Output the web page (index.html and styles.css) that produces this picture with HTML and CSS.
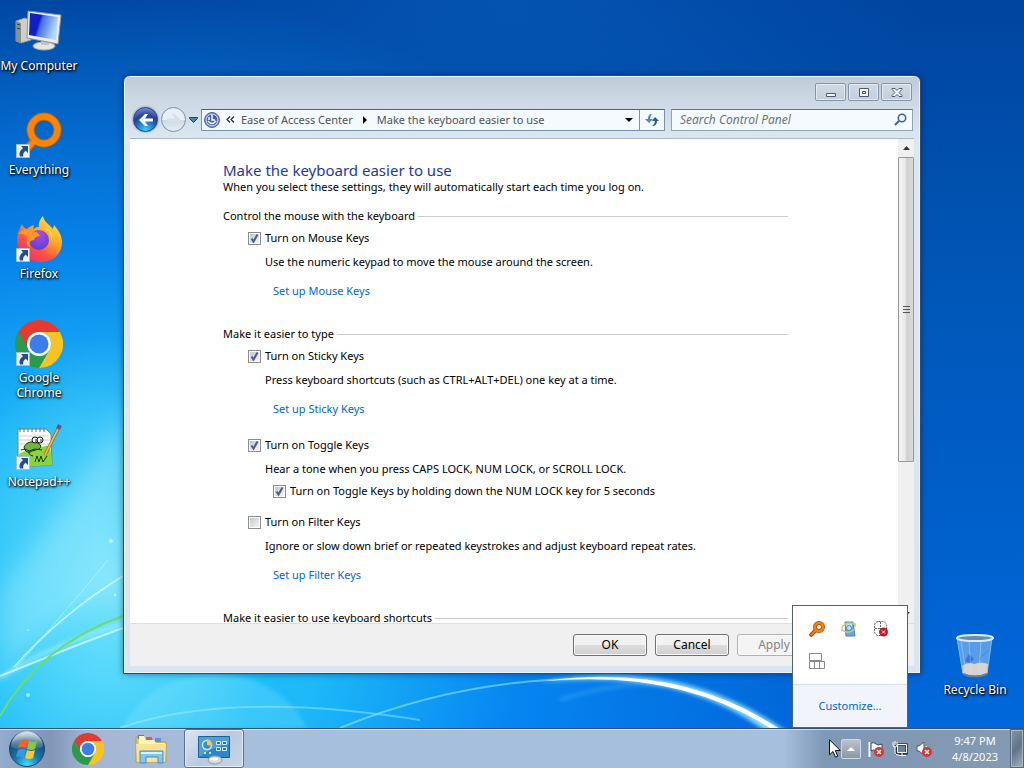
FILE: index.html
```html
<!DOCTYPE html>
<html lang="en">
<head>
    <meta charset="UTF-8">
    <meta name="viewport" content="width=device-width, initial-scale=1.0">
    <title>Make the keyboard easier to use</title>
    <link rel="stylesheet" href="styles.css">
</head>
<body>
    <!-- Shared icons -->
    <svg class="defs" width="0" height="0" aria-hidden="true">
        <defs>
            <linearGradient id="gloss" x1="0" y1="0" x2="0" y2="1">
                <stop offset="0" stop-color="#fff" stop-opacity=".75"/>
                <stop offset="1" stop-color="#fff" stop-opacity=".05"/>
            </linearGradient>
            <symbol id="chrome" viewBox="0 0 48 48">
                <path fill="#e33b2e" d="M3.2 12 13.6 30A12 12 0 0 1 24 12h20.8A24 24 0 0 0 3.2 12z"/>
                <path fill="#fcc31e" d="M44.8 12H24a12 12 0 0 1 10.4 18L24 48a24 24 0 0 0 20.8-36z"/>
                <path fill="#2a9b48" d="M24 48l10.4-18a12 12 0 0 1-20.8 0L3.2 12A24 24 0 0 0 24 48z"/>
                <circle cx="24" cy="24" r="12" fill="#fff"/>
                <circle cx="24" cy="24" r="9.5" fill="#3b7de9"/>
            </symbol>
            <symbol id="shortcut" viewBox="0 0 14 14">
                <path fill="#eef3fa" stroke="#a9bdd6" d="M.5.5h13v13H.5z"/>
                <path fill="#1f4f8f" d="M5 2h7v7L9.700 6.800C7.500 8.500 6.800 10 7.200 12.500H4C2.700 9.500 4 6.500 7 4.300z"/>
            </symbol>
        </defs>
    </svg>

    <div class="desktop">
        <svg class="wallpaper" viewBox="0 0 1024 728" preserveAspectRatio="none" aria-hidden="true">
            <defs>
                <filter id="soft"><feGaussianBlur stdDeviation="2"/></filter>
                <filter id="softer"><feGaussianBlur stdDeviation="12"/></filter>
            </defs>
            <path d="M0 590Q60 520 123 410V600Q60 600 0 680z" fill="#c4f8ff" opacity=".3" filter="url(#softer)"/>
            <path d="M122 728Q150 676 215 674Q280 676 307 728z" fill="#a8f4ff" opacity=".2" filter="url(#soft)"/>
            <g fill="none">
                <path d="M0 678Q50 645 123 624" stroke="#aef3ff" stroke-width="4" opacity=".6" filter="url(#soft)"/>
                <path d="M0 676Q35 662 65 650T123 628" stroke="#dcffff" stroke-width="2" opacity=".7"/>
                <path d="M14 667Q60 615 123 576" stroke="#dcffff" stroke-width="1.500" opacity=".7"/>
                <path d="M16 668Q75 600 108 560" stroke="#dcffff" opacity=".4"/>
                <path d="M0 716Q40 645 123 616" stroke="#6fdc62" stroke-width="2"/>
                <path d="M120 728Q230 690 420 720" stroke="#b6f4ff" stroke-width="2" opacity=".4"/>
                <path d="M340 728Q470 675 610 679" stroke="#8ee4ff" stroke-width="2" opacity=".6"/>
                <path d="M560 700Q620 680 680 684" stroke="#7ad4ff" stroke-width="3" opacity=".3" filter="url(#soft)"/>
            </g>
            <path d="M540 682Q680 655 790 734L764 730Q680 668 540 682z" fill="#8ddcff" filter="url(#soft)"/>
            <path d="M545 681Q680 662 781 730L773 730Q680 669 545 681z" fill="#fff"/>
            <g fill="#d4ffff"><circle cx="111" cy="541" r="2" opacity=".7"/><circle cx="115" cy="595" r="1"/><circle cx="28" cy="630" r="1" opacity=".6"/><circle cx="28" cy="695" r="2" opacity=".6"/></g>
        </svg>

        <ul class="shortcuts">
            <li class="shortcut">
                <svg viewBox="0 0 48 48">
                    <defs>
                        <linearGradient id="screen" x1="0" y1="0" x2="1" y2=".3"><stop offset="0" stop-color="#1426b8"/><stop offset=".4" stop-color="#0c1cc8"/><stop offset=".5" stop-color="#4470e0"/><stop offset="1" stop-color="#b5d7f8"/></linearGradient>
                    </defs>
                    <path d="M1 13l9-3 6 2v20L6 35l-5-2z" fill="#cfcfc9" stroke="#999"/>
                    <path d="M1 13l5 2v20l-5-2z" fill="#88918f"/>
                    <path d="M2 16l3 1M2 20l3 1" stroke="#333"/>
                    <ellipse cx="29" cy="38" rx="11" ry="4" fill="#e6e7e3" stroke="#aaa"/>
                    <path d="M26 29h8v8h-8z" fill="#bfc5c6"/>
                    <path d="M13 3l33 4-3 29-31-6z" fill="#e9ecea" stroke="#8b9397"/>
                    <path d="M15 5l28 4-2 23-27-5z" fill="url(#screen)"/>
                </svg>
                <span>My Computer</span>
            </li>
            <li class="shortcut">
                <svg viewBox="0 0 48 48">
                    <path d="M10 39l8-9" stroke="#d76400" stroke-width="8"/>
                    <circle cx="29" cy="18" r="13.500" fill="none" stroke="#c76400" stroke-width="8"/>
                    <circle cx="29" cy="18" r="13.500" fill="none" stroke="#ff8500" stroke-width="6"/>
                    <path d="M10 39l9-10" stroke="#ff8500" stroke-width="5"/>
                    <use href="#shortcut" x="1" y="32" width="14" height="14"/>
                </svg>
                <span>Everything</span>
            </li>
            <li class="shortcut">
                <svg viewBox="0 0 48 48">
                    <defs>
                        <linearGradient id="fox" x1=".9" y1="0" x2=".2" y2="1"><stop offset="0" stop-color="#fff44f"/><stop offset=".4" stop-color="#ffab27"/><stop offset=".7" stop-color="#ff4f45"/><stop offset="1" stop-color="#e52b72"/></linearGradient>
                        <radialGradient id="globe" cx=".5" cy=".2" r=".8"><stop offset="0" stop-color="#b14cdd"/><stop offset="1" stop-color="#5840d8"/></radialGradient>
                    </defs>
                    <path d="M28 0c1 6 6 8 10 13l1-4c4 5 8 10 8 17 0 13-10 20-22 20C12 46 2 37 2 24c0-7 3-11 5-16 1 3 2 4 5 5 2-2 4-3 7-4l-1 5c2-3 4-3 6-3-1-4 1-8 4-11z" fill="url(#fox)"/>
                    <circle cx="24" cy="24" r="10" fill="url(#globe)"/>
                    <path d="M3 18c5-6 10-6 15-2 3-1 5 1 7 4-3 0-5 1-6 4-4 0-6 3-3 8-6-3-5-9-2-11-4-3-7-4-11-3z" fill="#ff982b"/>
                    <path d="M24 12c8-1 13 5 12 13 4-7 0-14-12-13z" fill="#ffe044"/>
                    <use href="#shortcut" x="1" y="32" width="14" height="14"/>
                </svg>
                <span>Firefox</span>
            </li>
            <li class="shortcut">
                <svg viewBox="0 0 48 48">
                    <use href="#chrome" width="48" height="48"/>
                    <use href="#shortcut" x="1" y="32" width="14" height="14"/>
                </svg>
                <span>Google Chrome</span>
            </li>
            <li class="shortcut">
                <svg viewBox="0 0 48 48">
                    <path d="M3 5h28l5 5 1 31L3 43z" fill="#f9fcf7" stroke="#768579"/>
                    <path d="M4 12h29M4 16h31M4 20h31" stroke="#ccd4de"/>
                    <path d="M4 30c8-5 21-6 31-9l2 20-32 2z" fill="#8bd23b"/>
                    <path d="M5 4v4M9 4v4M13 4v4M17 4v4M21 4v4M25 4v4M29 4v4" stroke="#66757a"/>
                    <path d="M9 23q3-6 10-5l4 1q5 3 1 6l-7 2q-4 3-7-1z" fill="#70b83b" stroke="#173f18"/>
                    <circle cx="20" cy="16" r="3" fill="#fff" stroke="#111"/><circle cx="25" cy="16" r="3" fill="#fff" stroke="#111"/>
                    <path d="M21 15v3M26 15v3M6 26l4-1 4 2 6-2 7 1M14 27q-1 4 4 5M20 38l2-6 2 6 2-6 2 6 4-6" fill="none" stroke="#18370d"/>
                    <path d="M30 31L43 5" stroke="#8a5919" stroke-width="3"/><path d="M30 31L43 5" stroke="#f5b13f" stroke-width="2"/>
                    <path d="M43 5l2-4" stroke="#764c85" stroke-width="4"/>
                    <use href="#shortcut" x="1" y="32" width="14" height="14"/>
                </svg>
                <span>Notepad++</span>
            </li>
        </ul>

        <div class="shortcut recycle-bin">
            <svg viewBox="0 0 48 48">
                <path d="M6 6l6 36q12 5 24 0l5-36z" fill="#7db6ef" opacity=".7" stroke="#b9dafa"/>
                <path d="M11 34q6-5 12-2 7-3 14 0l-1 9q-12 5-24 0z" fill="#d6d4d2"/>
                <path d="M12 41q12 5 24 0v2q-12 5-24 0z" fill="#687c8e"/>
                <path d="M14 29l4-7 5 5-4 4zM28 27l10-9" fill="#3267d8" stroke="#4d83ce" opacity=".8"/>
                <path d="M10 9l5 31M18 10l2 29M30 10l-2 29" stroke="#c8e6ff" opacity=".4"/>
                <ellipse cx="24" cy="6" rx="18" ry="3" fill="#638eb1" stroke="#dbeef8" stroke-width="2"/>
            </svg>
            <span>Recycle Bin</span>
        </div>

        <div class="window">
            <div class="title-bar">
                <button class="caption-button" aria-label="Minimize"><svg viewBox="0 0 12 11"><path d="M1.500 6.500h9v3h-9z"/></svg></button>
                <button class="caption-button" aria-label="Maximize"><svg viewBox="0 0 12 11"><path d="M1.500 1.500h9v8h-9zM4.500 4.500h3v2h-3z"/></svg></button>
                <button class="caption-button" aria-label="Close"><svg viewBox="0 0 12 11"><path d="M1 1.500h3L6 3.500l2-2h3v1L8 5.500l3 3v1H8l-2-2-2 2H1v-1l3-3-3-3z"/></svg></button>
            </div>

            <div class="nav-bar">
                <div class="nav-buttons">
                    <button class="nav-button back" aria-label="Back"><svg viewBox="0 0 16 16"><path d="M1 8l6-6h3L7 6.500h8v3H7L10 14H7z" fill="#fff"/></svg></button>
                    <button class="nav-button forward" aria-label="Forward"><svg viewBox="0 0 16 16"><path d="M15 8L9 2H6l3 4.500H1v3h8L6 14h3z" fill="#d5e0e8"/></svg></button>
                    <button class="nav-history" aria-label="Recent pages"><svg viewBox="0 0 9 6"><path d="M.5 1.500V.5h8v1l-4 4z" fill="#4784a5" stroke="#24465f"/></svg></button>
                </div>
                <div class="address-bar">
                    <svg class="address-icon" viewBox="0 0 16 16"><circle cx="8" cy="8" r="7.500" fill="#7890c5" stroke="#556697"/><circle cx="8" cy="8" r="5.800" fill="#4261aa" stroke="#c8d8f4"/><path d="M8 3v5h3M5 5v3M4 9q4 5 8 0" fill="none" stroke="#fff" stroke-width="1.500"/></svg>
                    <svg class="chevrons" viewBox="0 0 9 7"><path d="M4 .5l-3 3 3 3M8 .5l-3 3 3 3" fill="none" stroke="#222" stroke-width="1.200"/></svg>
                    <a class="crumb" href="#">Ease of Access Center</a>
                    <svg class="crumb-arrow" viewBox="0 0 4 8"><path d="M0 0l4 4-4 4z"/></svg>
                    <a class="crumb" href="#">Make the keyboard easier to use</a>
                    <button class="address-drop" aria-label="Previous locations"><svg viewBox="0 0 8 4"><path d="M0 0h8L4 4z"/></svg></button>
                    <button class="refresh" aria-label="Refresh"><svg viewBox="0 0 16 14"><path d="M8 1Q4 1 4 6H1l4 4 4-4H6q0-3 2-5z" fill="#4488d2"/><path d="M8 13q5 0 5-5h2l-4-4-3 4h3q0 3-3 5z" fill="#28588f"/></svg></button>
                </div>
                <label class="search">
                    <input type="text" placeholder="Search Control Panel" aria-label="Search Control Panel">
                    <svg viewBox="0 0 13 13"><circle cx="8" cy="5" r="3.700" fill="none" stroke="#386891" stroke-width="1.600"/><path d="M5 8l-4 4" stroke="#386891" stroke-width="2.200"/></svg>
                </label>
            </div>

            <div class="client">
                <div class="view">
                    <main class="page">
                        <h1>Make the keyboard easier to use</h1>
                        <p class="intro">When you select these settings, they will automatically start each time you log on.</p>

                        <section class="group">
                            <h2>Control the mouse with the keyboard</h2>
                            <div class="setting">
                                <label class="check"><input type="checkbox" checked>Turn on Mouse Keys</label>
                                <p>Use the numeric keypad to move the mouse around the screen.</p>
                                <a class="setup" href="#">Set up Mouse Keys</a>
                            </div>
                        </section>

                        <section class="group">
                            <h2>Make it easier to type</h2>
                            <div class="setting">
                                <label class="check"><input type="checkbox" checked>Turn on Sticky Keys</label>
                                <p>Press keyboard shortcuts (such as CTRL+ALT+DEL) one key at a time.</p>
                                <a class="setup" href="#">Set up Sticky Keys</a>
                            </div>
                            <div class="setting toggle-keys">
                                <label class="check"><input type="checkbox" checked>Turn on Toggle Keys</label>
                                <p>Hear a tone when you press CAPS LOCK, NUM LOCK, or SCROLL LOCK.</p>
                                <label class="check nested"><input type="checkbox" checked>Turn on Toggle Keys by holding down the NUM LOCK key for 5 seconds</label>
                            </div>
                            <div class="setting filter-keys">
                                <label class="check"><input type="checkbox">Turn on Filter Keys</label>
                                <p>Ignore or slow down brief or repeated keystrokes and adjust keyboard repeat rates.</p>
                                <a class="setup" href="#">Set up Filter Keys</a>
                            </div>
                        </section>

                        <section class="group">
                            <h2>Make it easier to use keyboard shortcuts</h2>
                        </section>
                    </main>
                    <div class="scrollbar">
                        <div class="scroll-arrow"><svg viewBox="0 0 7 4"><path d="M0 4l3.500-4L7 4z"/></svg></div>
                        <div class="scroll-track"><div class="scroll-thumb"><i></i><i></i><i></i></div></div>
                        <div class="scroll-arrow"><svg viewBox="0 0 7 4"><path d="M0 0l3.500 4L7 0z"/></svg></div>
                    </div>
                </div>
                <div class="actions">
                    <button class="action">OK</button>
                    <button class="action">Cancel</button>
                    <button class="action" disabled>Apply</button>
                </div>
            </div>
        </div>
    </div>

    <footer class="taskbar">
        <button class="start" aria-label="Start">
            <svg viewBox="0 0 38 38">
                <defs>
                    <radialGradient id="orb" cx=".5" cy=".95" r=".9"><stop offset="0" stop-color="#3fe2ff"/><stop offset=".4" stop-color="#1478b4"/><stop offset=".8" stop-color="#174c77"/><stop offset="1" stop-color="#6f95b0"/></radialGradient>
                </defs>
                <circle cx="19" cy="19" r="17.500" fill="url(#orb)" stroke="#24425f"/>
                <path d="M3 17a16 16 0 0 1 32 0q-16 6-32 0z" fill="url(#gloss)"/>
                <path d="M12 11q4-3 8-1l-2 8q-4-2-8 0z" fill="#ef642c"/>
                <path d="M21 11q4 2 8 0l-2 8q-4 2-8 0z" fill="#8bc640"/>
                <path d="M10 20q4-2 8 0l-2 8q-4-3-8-1z" fill="#3a96df"/>
                <path d="M19 20q4 2 8 0l-2 8q-4 2-8 0z" fill="#fdc82f"/>
            </svg>
        </button>
        <button class="task" aria-label="Google Chrome"><svg class="chrome-icon"><use href="#chrome"/></svg></button>
        <button class="task" aria-label="Windows Explorer">
            <svg viewBox="0 0 34 32">
                <path d="M2 4h7l2 3h8l2 2h11v20H2z" fill="#e8c966" stroke="#b49a46"/>
                <path d="M4 2h6v4H4z" fill="#3d9c4c"/><path d="M12 4h6v4h-6z" fill="#de5b38"/><path d="M21 5h6v4h-6z" fill="#5d90d7"/>
                <path d="M5 3h5l2 4h8l2 3h9v7H5z" fill="#fff5c4"/>
                <path d="M2 11h30l-1 18H3z" fill="#f9e391"/>
                <path d="M6 18h23v12h-5v-6H12v6H6z" fill="#83c6ec" stroke="#478fbd"/>
                <path d="M7 19h21v2H7z" fill="#d7f3ff"/>
            </svg>
        </button>
        <button class="task active" aria-label="Control Panel">
            <svg viewBox="0 0 34 32">
                <path d="M1.500 3.500h31v21h-31z" fill="#2d86c6" stroke="#1d5f9d"/><path d="M2 4h30v7Q15 14 2 24z" fill="#71b9e6" opacity=".5"/>
                <circle cx="10" cy="12" r="4.500" fill="#388dc4" stroke="#c9ebff" stroke-width="1.500"/><path d="M10 12V6a6 6 0 0 1 5 7z" fill="#ffc34a"/>
                <path d="M19.500 8.500h4v3h-4zM25.500 8.500h4v3h-4zM19.500 14.500h4v3h-4zM25.500 14.500h4v3h-4z" fill="#1c79b2" stroke="#d5f0ff"/>
                <path d="M7 20h2M12 20h2" stroke="#c0ed8d" stroke-width="2"/>
                <ellipse cx="18" cy="27" rx="7" ry="4" fill="#d5d9d5" stroke="#929c9e"/><ellipse cx="17" cy="26" rx="4" ry="1.500" fill="#fff"/>
            </svg>
        </button>

        <div class="tray">
            <svg class="pointer" viewBox="0 0 12 19" aria-hidden="true"><path d="M.5.8v15l3.500-3.300 2.500 5.700 2.300-1-2.500-5.700h5z" fill="#fff" stroke="#111"/></svg>
            <button class="tray-toggle" aria-label="Show hidden icons"><svg viewBox="0 0 8 4"><path d="M0 4l4-4 4 4z" fill="#fff"/></svg></button>
            <svg class="tray-icon" viewBox="0 0 16 16"><path d="M1.500 1v15" stroke="#fff" stroke-width="2"/><path d="M3 2q3-1 5 1t6 0v7q-3 2-6 0T3 10z" fill="#fff" stroke="#38465b"/><circle cx="11" cy="11" r="5" fill="#d8362c"/><path d="M9 9l4 4m0-4l-4 4" stroke="#fff" stroke-width="1.500"/></svg>
            <svg class="tray-icon" viewBox="0 0 16 16" fill="none"><path d="M4.500 3.500h10v9h-10z" fill="#6d829b" stroke="#27374b" stroke-width="2.500"/><path d="M5.500 3.500h9v8h-9zM7 14.500h7M10 12v2M1 1v3q0 2 2 2t2-2V1M3 0v4M3 6v6q0 2 4 2" stroke="#fff"/></svg>
            <svg class="tray-icon" viewBox="0 0 16 16"><path d="M1 5h2l5-4v13l-5-4H1z" fill="#fff" stroke="#4a5b70"/><path d="M10 5q2 2 0 6" fill="none" stroke="#fff"/><circle cx="11" cy="11" r="5" fill="#d8362c"/><path d="M9 9l4 4m0-4l-4 4" stroke="#fff" stroke-width="1.500"/></svg>
            <div class="clock"><time>9:47 PM</time><time>4/8/2023</time></div>
            <button class="show-desktop" aria-label="Show desktop"></button>

            <div class="tray-popup">
                <div class="tray-popup-icons">
                    <svg viewBox="0 0 16 16"><path d="M1 15l6-6" stroke="#9d4b06" stroke-width="4"/><circle cx="10" cy="6" r="4" fill="none" stroke="#a75005" stroke-width="4"/><circle cx="10" cy="6" r="4" fill="none" stroke="#f28316" stroke-width="2.500"/><path d="M2 14l5-5" stroke="#f28316" stroke-width="2"/></svg>
                    <svg viewBox="0 0 16 16"><path d="M4 1h8l2 14H5z" fill="#69aad9" stroke="#4c84b4"/><path d="M5 2h6v5H5z" fill="#b9e2f4"/><path d="M1 6q6-7 14-2M1 9q6 5 13-1M1 6v4M14 2v4" fill="none" stroke="#d9c57c" stroke-width="1.500"/><circle cx="8" cy="7" r="2.500" fill="#bdecf7" stroke="#478bbd"/></svg>
                    <svg viewBox="0 0 16 16"><rect x="1.500" y=".5" width="12" height="14" rx="4" fill="#fff" stroke="#555" stroke-dasharray="2 1"/><path d="M7.500 1v7M2 7.500h11" stroke="#666" stroke-dasharray="2 1"/><circle cx="10.500" cy="11" r="4.500" fill="#ce1628"/><path d="M9 9.500l3 3m0-3l-3 3" stroke="#fff"/></svg>
                    <svg viewBox="0 0 16 16" fill="none" stroke="#888"><path d="M.5.5h12v7H.5zM.5 8.500h15v7H.5zM5.500 9v6M10.500 9v6"/></svg>
                </div>
                <a class="customize" href="#">Customize...</a>
            </div>
        </div>
    </footer>
</body>
</html>
```
FILE: styles.css
```css
* {
    box-sizing: border-box;
}

body {
    margin: 0;
    height: 100vh;
    display: flex;
    flex-direction: column;
    overflow: hidden;
    font-family: "Noto Sans", "Open Sans", sans-serif;
    font-size: 12px;
    line-height: 16px;
    color: #000;
}

h1, h2, p, ul {
    margin: 0;
    padding: 0;
    font-weight: normal;
}

button, input {
    margin: 0;
    padding: 0;
    font: inherit;
    color: inherit;
}

button {
    display: flex;
    align-items: center;
    justify-content: center;
}

a {
    color: #0066cc;
    text-decoration: none;
}

svg {
    display: block;
    flex: none;
}

.defs {
    position: absolute;
}

/* Desktop */
.desktop {
    flex: 1;
    min-height: 0;
    position: relative;
    background:
        radial-gradient(ellipse 16% 34% at 11% 80%, rgba(160, 240, 252, 0.6), transparent),
        radial-gradient(ellipse 68% 88% at 10% 86%, #2ccefa 0%, #1cb8f8 32%, rgba(8, 144, 250, 0.75) 60%, rgba(0, 110, 220, 0) 100%),
        radial-gradient(ellipse 40% 30% at 50% 0, rgba(10, 105, 205, 0.4), transparent),
        linear-gradient(180deg, #00459f 0%, #0057b8 40%, #0068dc 100%);
}

.wallpaper {
    position: absolute;
    inset: 0;
    width: 100%;
    height: 100%;
}

.shortcuts {
    position: absolute;
    top: 8px;
    left: 0;
    display: grid;
    grid-auto-rows: 104px;
    list-style: none;
}

.shortcut {
    width: 78px;
    display: flex;
    flex-direction: column;
    align-items: center;
    gap: 2px;
    line-height: 15px;
    text-align: center;
    color: #fff;
    text-shadow: 1px 1px 2px #000, 0 1px 3px #000;
}

.shortcut svg {
    width: 48px;
    height: 48px;
}

.recycle-bin {
    position: absolute;
    right: 10px;
    bottom: 31px;
}

/* Window */
.window {
    position: absolute;
    top: 75px;
    right: 103px;
    bottom: 54px;
    left: 123px;
    display: flex;
    flex-direction: column;
    padding: 0 6px 7px;
    border: 1px solid #294b78;
    border-radius: 7px 7px 0 0;
    background: linear-gradient(180deg, #bfccd9 0, #ccd8e3 24px, #dce7f1 64px, #d8e5f2 100%);
    box-shadow: inset 0 0 0 1px #eaf4fc, 0 0 6px rgba(0, 20, 70, 0.5);
}

.title-bar {
    display: flex;
    justify-content: flex-end;
    gap: 2px;
    padding: 7px 2px 6px;
}

.caption-button {
    width: 31px;
    height: 18px;
    border: 1px solid #8495aa;
    border-radius: 2px;
    background: linear-gradient(#ced9e4, #c3d0dd);
    box-shadow: inset 0 0 0 1px rgba(255, 255, 255, 0.5);
}

.caption-button svg {
    width: 12px;
    height: 11px;
    fill: #f5f9fc;
    stroke: #4c5c70;
}

.nav-bar {
    display: flex;
    align-items: center;
    gap: 6px;
    padding: 0 1px 6px 3px;
}

.nav-buttons {
    display: flex;
    align-items: center;
    gap: 3px;
    width: 62px;
}

.nav-button {
    flex: none;
    width: 25px;
    height: 25px;
    border: 1px solid #7f91a4;
    border-radius: 50%;
}

.nav-button svg {
    width: 16px;
    height: 16px;
}

.back {
    border-color: #233f79;
    background: radial-gradient(circle at 50% 100%, #42d7fa 0, #1763b8 45%, #263e9d 60%, #91a5df 100%);
    box-shadow: 0 0 2px #4d6788;
}

.forward {
    background: linear-gradient(#e8eff6 50%, #ccd8e3 50%, #e5edf4);
}

.nav-history {
    flex: none;
    border: 0;
    background: none;
}

.nav-history svg {
    width: 9px;
    height: 6px;
}

.address-bar {
    flex: 1;
    min-width: 0;
    height: 22px;
    display: flex;
    align-items: center;
    border: 1px solid #7693ad;
    border-top-color: #48637c;
    background: #f5fafe;
    white-space: nowrap;
}

.address-icon {
    width: 16px;
    height: 16px;
    margin: 0 6px 0 2px;
}

.chevrons {
    width: 9px;
    height: 7px;
    margin-right: 6px;
}

.crumb {
    font-size: 11px;
    color: #4f5358;
}

.crumb-arrow {
    width: 4px;
    height: 8px;
    margin: 0 10px;
}

.address-drop {
    width: 20px;
    height: 20px;
    margin-left: auto;
    border: 0;
    background: none;
}

.address-drop svg {
    width: 8px;
    height: 4px;
}

.refresh {
    width: 25px;
    height: 20px;
    border: 0;
    border-left: 1px solid #7693ad;
    background: none;
}

.refresh svg {
    width: 16px;
    height: 14px;
}

.search {
    flex: 0 1 242px;
    height: 22px;
    display: flex;
    align-items: center;
    padding: 0 5px 0 8px;
    border: 1px solid #8ba5bb;
    border-top-color: #5b7690;
    background: #f5fafe;
}

.search input {
    flex: 1;
    min-width: 0;
    border: 0;
    outline: 0;
    background: none;
}

.search input::placeholder {
    color: #6d7378;
    font-style: italic;
}

.search svg {
    width: 13px;
    height: 13px;
}

/* Page */
.client {
    flex: 1;
    min-height: 0;
    display: flex;
    flex-direction: column;
    border-top: 1px solid #a9b9c9;
    background: #fff;
}

.view {
    flex: 1;
    min-height: 0;
    display: flex;
}

.page {
    flex: 1;
    min-width: 0;
    overflow: hidden;
    padding: 22px 110px 0 93px;
    font-size: 11px;
}

h1 {
    font-size: 15px;
    line-height: 18px;
    color: #1d3a9c;
}

.group {
    margin-top: 27px;
}

.intro + .group {
    margin-top: 13px;
}

h2 {
    display: flex;
    align-items: center;
    gap: 3px;
    font-size: 11px;
}

h2::after {
    content: "";
    flex: 1;
    border-top: 1px solid #ccc;
}

.setting {
    margin-top: 6px;
    padding-left: 42px;
}

.toggle-keys {
    margin-top: 20px;
}

.filter-keys {
    margin-top: 15px;
}

.setting p {
    margin-top: 8px;
}

.check {
    display: flex;
    align-items: center;
    gap: 4px;
    margin-left: -17px;
}

.check.nested {
    margin: 6px 0 0 8px;
}

.check input {
    appearance: none;
    width: 13px;
    height: 13px;
    border: 1px solid #8a8c8e;
    background: linear-gradient(135deg, #c3c7cb, #f6f6f6) content-box;
    padding: 1px;
}

.check input:checked {
    background:
        url("data:image/svg+xml,%3Csvg xmlns='http://www.w3.org/2000/svg' viewBox='0 0 11 11'%3E%3Cpath d='M2.500 5.500l2 3 4-7' fill='none' stroke='%234a5a96' stroke-width='2'/%3E%3C/svg%3E"),
        linear-gradient(135deg, #c3c7cb, #f6f6f6) content-box;
}

.setup {
    display: block;
    width: fit-content;
    margin: 13px 0 0 8px;
}

.scrollbar {
    width: 16px;
    display: flex;
    flex-direction: column;
    background: #f0f0f0;
}

.scroll-arrow {
    height: 18px;
    display: flex;
    align-items: center;
    justify-content: center;
}

.scroll-arrow svg {
    width: 7px;
    height: 4px;
    fill: #333;
}

.scroll-track {
    flex: 1;
}

.scroll-thumb {
    height: 68%;
    display: flex;
    flex-direction: column;
    align-items: center;
    justify-content: center;
    gap: 2px;
    border: 1px solid #989898;
    border-radius: 1px;
    background: linear-gradient(90deg, #f4f4f4, #e8e8e8 45%, #cfcfcf 55%, #dadada);
}

.scroll-thumb i {
    width: 7px;
    height: 1px;
    background: #555;
}

.actions {
    display: flex;
    justify-content: flex-end;
    gap: 8px;
    padding: 10px 103px;
    border-top: 1px solid #dfdfdf;
    background: #f0f0f0;
}

.action {
    width: 74px;
    height: 22px;
    border: 1px solid #707070;
    border-radius: 3px;
    background: linear-gradient(#f2f2f2 50%, #dddddd 50%, #cfcfcf);
    box-shadow: inset 0 0 0 1px #fafafa;
}

.action:disabled {
    border-color: #adb2b5;
    background: #f4f4f4;
    color: #838383;
}

/* Taskbar */
.taskbar {
    position: relative;
    flex: none;
    height: 40px;
    display: flex;
    align-items: stretch;
    border-top: 1px solid #34516f;
    background: linear-gradient(90deg, #94acce 0, #8095b7 50px, #a5b6d5 90px, #a6bfdd 240px, #a6bfdd calc(100% - 240px), #7f98b6 calc(100% - 200px), #8599b2 100%);
    box-shadow: inset 0 1px 0 rgba(215, 235, 250, 0.8);
}

.start, .task {
    border: 0;
    background: none;
}

.start {
    width: 54px;
}

.start svg {
    width: 38px;
    height: 38px;
}

.task {
    width: 60px;
    margin-right: 3px;
}

.start + .task {
    margin-left: 4px;
}

.task svg {
    width: 34px;
    height: 32px;
}

.task .chrome-icon {
    width: 32px;
}

.task.active {
    border: 1px solid #5b7090;
    border-radius: 3px;
    background: linear-gradient(135deg, #dce6f2, #b9cae0 50%, #c6d7eb);
    box-shadow: inset 0 0 0 1px #e3edf7;
}

.tray {
    display: flex;
    align-items: center;
    margin-left: auto;
}

.pointer {
    width: 12px;
    height: 19px;
    z-index: 1;
}

.tray-toggle {
    width: 20px;
    height: 20px;
    margin-right: 7px;
    border: 1px solid #d0d8e0;
    border-radius: 2px;
    background: linear-gradient(#b9c3cb, #8b98a5);
}

.tray-toggle svg {
    width: 8px;
    height: 4px;
}

.tray-icon {
    width: 16px;
    height: 16px;
    margin-right: 8px;
}

.clock {
    width: 70px;
    display: flex;
    flex-direction: column;
    align-items: center;
    font-size: 11px;
    color: #fff;
}

.show-desktop {
    align-self: stretch;
    width: 14px;
    border: 1px solid #52677f;
    background: linear-gradient(135deg, #8795a6, #5f7389 50%, #a4b3c3);
    box-shadow: inset 0 0 0 1px #a7b7c7;
}

.tray-popup {
    position: absolute;
    right: 116px;
    bottom: 40px;
    width: 116px;
    border: 1px solid #54616f;
    background: #fff;
}

.tray-popup-icons {
    display: grid;
    grid-template-columns: repeat(3, 16px);
    gap: 16px;
    padding: 15px 16px;
}

.tray-popup-icons svg {
    width: 16px;
    height: 16px;
}

.customize {
    display: flex;
    align-items: center;
    justify-content: center;
    height: 43px;
    border-top: 1px solid #d9dfea;
    background: #f1f5fb;
    font-size: 11px;
}
```
